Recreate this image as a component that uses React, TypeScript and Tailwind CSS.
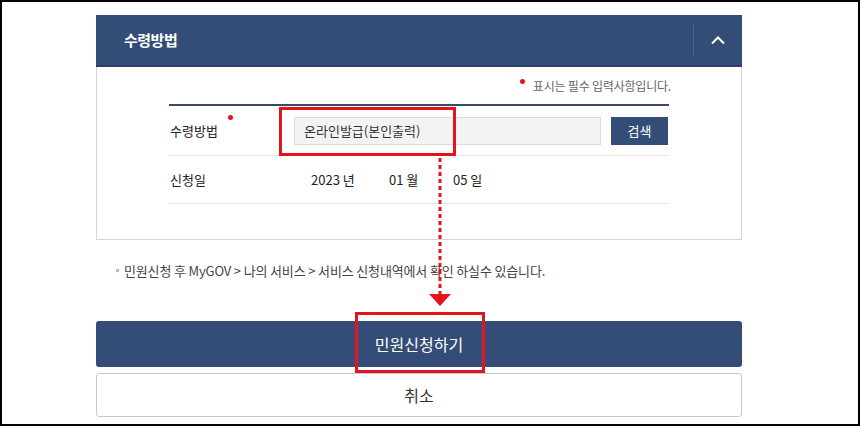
import React from "react";

const font = { fontFamily: '"Noto Sans CJK KR", "Noto Sans", sans-serif' };

function RedBox({ className }: { className: string }) {
  return <div className={`absolute border-[3px] border-[#e3141c] pointer-events-none ${className}`} />;
}

export default function App() {
  return (
    <div
      className="relative w-[860px] h-[426px] border-2 border-black bg-white overflow-hidden text-[#222]"
      style={font}
    >
      <div className="ml-[94px] w-[646px] pt-[13px]">
        {/* panel header */}
        <div className="flex h-[52px] items-stretch bg-[#344d76] border-b-2 border-[#2b4068]">
          <div className="flex flex-1 items-center pl-[28px] text-[15px] font-bold text-white tracking-[-0.5px]">
            수령방법
          </div>
          <div className="my-[8px] w-px bg-[#4b6290]" />
          <div className="flex w-[48px] items-center justify-center">
            <svg width="16" height="10" viewBox="0 0 16 10" fill="none">
              <path d="M2 8.5 L8 2.5 L14 8.5" stroke="#fff" strokeWidth="2" />
            </svg>
          </div>
        </div>

        {/* panel body */}
        <div className="h-[173px] border border-t-0 border-[#d4d4d4] pt-[11px]">
          <div className="flex justify-end pr-[70px] text-[12px] text-[#666] leading-[16px] tracking-[-0.2px]">
            <span className="relative mr-[8px] -top-[5px] h-[5px] w-[5px] self-center rounded-full bg-[#e3141c]" />
            표시는 필수 입력사항입니다.
          </div>

          <div className="ml-[72px] mt-[10px] w-[500px] border-t-2 border-[#3a4a63] text-[13px]">
            <div className="flex h-[50px] items-center border-b border-[#e8e8e8]">
              <div className="relative w-[125px] pl-[1px]">
                수령방법
                <span className="absolute left-[59px] top-[-6px] h-[5px] w-[5px] rounded-full bg-[#e3141c]" />
              </div>
              <div className="flex h-[28px] w-[307px] items-center border border-[#dcdcdc] bg-[#f3f3f3] pl-[9px] text-[#333]">
                온라인발급(본인출력)
              </div>
              <button className="ml-[10px] h-[28px] w-[57px] bg-[#344d76] text-[13px] text-white">
                검색
              </button>
            </div>
            <div className="flex h-[48px] items-center border-b border-[#e8e8e8]">
              <div className="w-[142px] pl-[1px]">신청일</div>
              <div className="w-[78px]">2023 년</div>
              <div className="w-[64px]">01 월</div>
              <div>05 일</div>
            </div>
          </div>
        </div>

        {/* note */}
        <div className="mt-[21px] flex items-center pl-[20px] text-[13px] text-[#444] tracking-[-0.15px]">
          <span className="mr-[5px] h-[3px] w-[3px] bg-[#bbb]" />
          민원신청 후 MyGOV &gt; 나의 서비스 &gt; 서비스 신청내역에서 확인 하실수 있습니다.
        </div>

        {/* buttons */}
        <button className="mt-[40px] flex h-[46px] w-full items-center justify-center rounded-[3px] bg-[#344d76] text-[16px] text-white">
          민원신청하기
        </button>
        <button className="mt-[6px] flex h-[44px] w-full items-center justify-center rounded-[3px] border border-[#c8c8c8] bg-white text-[16px] text-[#333]">
          취소
        </button>
      </div>

      {/* annotations */}
      <RedBox className="left-[277px] top-[105px] w-[177px] h-[49px]" />
      <RedBox className="left-[353px] top-[310px] w-[130px] h-[61px]" />
      <svg className="absolute left-[425px] top-[154px] pointer-events-none" width="26" height="152" viewBox="0 0 26 152">
        <line x1="13" y1="2" x2="13" y2="138" stroke="#e3141c" strokeWidth="3" strokeDasharray="4 3" />
        <polygon points="2,138 24,138 13,150" fill="#e3141c" />
      </svg>
    </div>
  );
}
